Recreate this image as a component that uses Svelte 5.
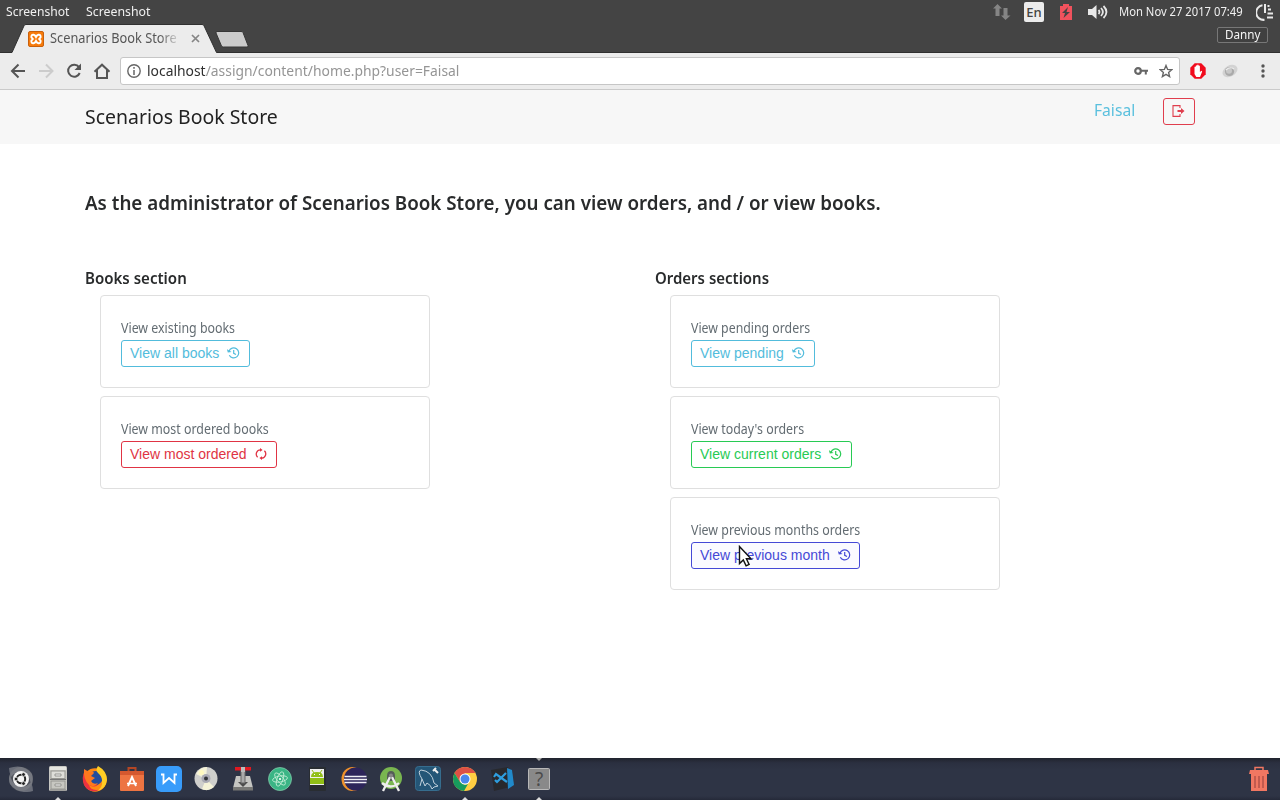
<script>
  function fit(node, width) {
    const natural = node.offsetWidth;
    node.style.width = width + 'px';
    node.style.transform = `scaleX(${width / natural})`;
  }

  const sections = [
    {
      title: 'Books section', width: 102,
      cards: [
        { text: 'View existing books', width: 114, button: 'View all books', bw: 129, tone: 'info', icon: 'history' },
        { text: 'View most ordered books', width: 148, button: 'View most ordered', bw: 156, tone: 'danger', icon: 'sync' }
      ]
    },
    {
      title: 'Orders sections', width: 114,
      cards: [
        { text: 'View pending orders', width: 119.5, button: 'View pending', bw: 124, tone: 'info', icon: 'history' },
        { text: "View today's orders", width: 113, button: 'View current orders', bw: 161, tone: 'success', icon: 'history' },
        { text: 'View previous months orders', width: 169.5, button: 'View previous month', bw: 169, tone: 'primary', icon: 'history' }
      ]
    }
  ];
  const apps = ['ubuntu', 'files', 'firefox', 'software', 'wps', 'disc', 'installer', 'atom', 'android', 'eclipse', 'studio', 'mysql', 'chrome', 'code', 'unknown'];
  const running = ['files', 'chrome', 'unknown'];
</script>

<div class="screen">
  <header class="panel">
    <span class="fit" use:fit={63}>Screenshot</span>
    <span class="fit second" use:fit={64}>Screenshot</span>
    <div class="tray">
      <svg class="net" width="18" height="18" viewBox="0 0 18 18"><path fill="#858585" d="M4.500 1 9 5.500H6.500V13h-4V5.500H0zM10.500 5h4v7.500H17.500L12.500 17 8 12.500h2.500z" /></svg>
      <span class="lang">En</span>
      <svg class="battery" width="12" height="16" viewBox="0 0 12 16"><path fill="#f0525d" d="M3 0h6v2h3v14H0V2h3z" /><path fill="#444" d="M8 3 2 9h3l-1.500 5L10 8H6.500z" /></svg>
      <svg class="sound" width="20" height="14" viewBox="0 0 20 14"><path fill="#e8e8e8" d="M0 4h4l4.500-4v14L4 10H0z" /><g fill="none" stroke="#e8e8e8" stroke-width="1.800"><path d="M10.500 5q2 2 0 4M13 3q3.800 4 0 8M15.500 1q6 6 0 12" /></g></svg>
      <span class="fit clock" use:fit={124}>Mon Nov 27 2017 07:49</span>
      <svg class="power" width="18" height="17" viewBox="0 0 18 17"><g fill="none" stroke="#e8e8e8" stroke-width="2"><path d="M6.500 1.300A7.200 7.200 0 0 0 8.500 15.800M9 0v9M12 5.500h3M11.500 9.500H17M11 13.500h6M11.500 2h2" /></g></svg>
    </div>
  </header>

  <div class="tabs">
    <div class="tab">
      <svg class="shape" width="209" height="29" viewBox="0 0 209 29"><path fill="#ececec" stroke="#303030" d="M-2 28.500H1L13 1.800Q13.600.5 15 .5H191q1.500 0 2 1.300l12.500 26.700H211V30H-2z" /></svg>
      <svg class="xampp" width="16" height="16" viewBox="0 0 16 16"><rect x=".5" y=".5" width="15" height="15" rx="1.500" fill="#f77b0b" stroke="#c9600c" /><path d="M5.500 3.800Q3 3.500 3.400 6.300L4.800 8 3.400 9.700Q3 12.500 5.500 12.200 7 12 8 10 9 12 10.500 12.200 13 12.500 12.600 9.700L11.200 8l1.400-1.700Q13 3.500 10.500 3.800 9 4 8 6 7 4 5.500 3.800z" fill="none" stroke="#fff" stroke-width="1.900" /></svg>
      <div class="caption"><span class="fit" use:fit={127}>Scenarios Book Store</span></div>
      <svg class="close" width="9" height="9" viewBox="0 0 9 9"><path d="m1 1 7 7M8 1 1 8" stroke="#858585" stroke-width="1.700" /></svg>
    </div>
    <svg class="newtab" width="34" height="17" viewBox="0 0 34 17"><path fill="#cbcbcb" stroke="#363636" d="M2 .5h24q1.500 0 2 1l5 13q.5 1.500-1 1.500H8.500q-1.500 0-2-1L1 2Q.5.500 2 .5z" /></svg>
    <div class="profile"><span class="fit" use:fit={35}>Danny</span></div>
  </div>

  <div class="toolbar">
    <svg class="nav" width="101" height="18" viewBox="0 0 101 18"><g fill="none" stroke="#555" stroke-width="2"><path d="M15 9H2.500M8.500 2.500 2 9l6.500 6.500" /><path stroke="#ccc" d="M29 9h13M36 2.500 42.500 9 36 15.500" /><path d="M69 5.200A6 6 0 1 0 69.700 11" /><path fill="#555" stroke="none" d="M71 1.500V8h-6.500z" /><path d="M84.500 9.700 92 2.700l7.500 7M87 8v8h10V8" /></g></svg>
    <div class="address">
      <svg width="14" height="14" viewBox="0 0 14 14"><circle cx="7" cy="7" r="6.200" fill="none" stroke="#666" stroke-width="1.400" /><path d="M7 6v5M7 3v1.700" stroke="#666" stroke-width="1.500" /></svg>
      <span class="fit url" use:fit={312}><b>localhost</b>/assign/content/home.php?user=Faisal</span>
      <svg class="key" width="14" height="8" viewBox="0 0 14 8"><path fill="none" stroke="#666" stroke-width="2" d="M7 3.700H14M11.800 4v3.500" /><circle cx="4" cy="4" r="2.800" fill="none" stroke="#666" stroke-width="2.200" /></svg>
      <svg class="star" width="14" height="14" viewBox="0 0 14 14"><path fill="none" stroke="#666" stroke-width="1.400" d="m7 1.500 1.600 3.900 4.200.3-3.200 2.700 1 4.200L7 10.300l-3.600 2.300 1-4.200L1.200 5.700l4.200-.3z" /></svg>
    </div>
    <svg class="adblock" width="16" height="16" viewBox="0 0 16 16"><path fill="#f10b1d" d="M4.700.3h6.600l4.400 4.400v6.600l-4.400 4.400H4.700L.3 11.300V4.700z" /><path fill="#fff" d="M4.500 4q.7-1 1.300 0V2.700q.8-1 1.400 0V2q.8-1 1.400 0v.8q.9-.8 1.300.4V9l1.600-1.200q1 .2.500 1.200L10 14H6.300L4.500 11z" /></svg>
    <svg class="ext" width="16" height="14" viewBox="0 0 16 14"><ellipse cx="8" cy="7" rx="8" ry="5.500" fill="#d2d2d2" transform="rotate(-30 8 7)" /><circle cx="7.500" cy="7.500" r="4.600" fill="#aaa" /><circle cx="7" cy="6.800" r="3" fill="#c8c8c8" /><path d="M4 6q4-4 8-1" fill="none" stroke="#eee" stroke-width="1.100" /></svg>
    <svg class="more" width="4" height="14" viewBox="0 0 4 14"><g fill="#555"><circle cx="2" cy="2" r="1.700" /><circle cx="2" cy="7" r="1.700" /><circle cx="2" cy="12" r="1.700" /></g></svg>
  </div>

  <nav class="site">
    <span class="fit brand" use:fit={192.5}>Scenarios Book Store</span>
    <span class="fit user" use:fit={41}>Faisal</span>
    <button class="logout" aria-label="Log out"><svg width="13" height="12" viewBox="0 0 13 12"><path fill="none" stroke="#e03e4d" stroke-width="1.100" d="M8 3V.6H1v10.800h7V9" /><path fill="#e03e4d" d="M5.500 5.100H9V3l3.500 3L9 9V6.900H5.500z" /></svg></button>
  </nav>

  <main>
    <h1><span class="fit" use:fit={796}>As the administrator of Scenarios Book Store, you can view orders, and / or view books.</span></h1>
    <div class="columns">
      {#each sections as section}
        <section>
          <h2><span class="fit" use:fit={section.width}>{section.title}</span></h2>
          {#each section.cards as card}
            <article>
              <p><span class="fit" use:fit={card.width}>{card.text}</span></p>
              <button class="action {card.tone}" style="width: {card.bw}px">
                <span>{card.button}</span>
                {#if card.icon === 'history'}
                  <svg width="13" height="12" viewBox="0 0 13 12"><path fill="none" stroke="currentColor" stroke-width="1.200" d="M2 4.200A5 5 0 1 1 2.300 8.300M6.700 3v3.300l2.300 1.300" /><path fill="currentColor" d="M-.1 2.200.8 5.600l3.800-.5z" /></svg>
                {:else}
                  <svg class="sync" width="12" height="12" viewBox="0 0 12 12"><path fill="none" stroke="currentColor" stroke-width="1.300" d="M2.600 9.200A4.300 4.300 0 0 1 5.500 1.800M9.400 2.800A4.300 4.300 0 0 1 6.500 10.200" /><path fill="currentColor" d="M5 0v3.800L7.600 1.900zM7 8.200V12L4.400 10.100z" /></svg>
                {/if}
              </button>
            </article>
          {/each}
        </section>
      {/each}
    </div>
    <svg class="cursor" width="16" height="24" viewBox="0 0 16 24"><path fill="#fff" stroke="#111" stroke-width="1.400" d="M1.500 1.500v17l3.800-3.600 2.800 6 3-1.400-2.700-5.700H13z" /></svg>
  </main>

  <footer class="dock">
    {#each apps as app}
      <div class="app">
        <svg width="26" height="26" viewBox="0 0 26 26">
          {#if app === 'ubuntu'}
            <circle cx="13" cy="13" r="12" fill="#50535c" /><path d="M1 2Q16-3 24 8q2 6-1 13 0-10-7-14T3 11Q1 6 1 2zM25 25Q10 29 2 18 0 13 2 8q1 9 8 12t13-4q2 5 2 9z" fill="#8b8e95" opacity=".65" /><circle cx="13" cy="13" r="8" fill="#f5f5f5" /><circle cx="13" cy="13" r="4.200" fill="none" stroke="#222" stroke-width="2" /><g fill="#222" stroke="#f5f5f5" stroke-width=".8"><circle cx="8" cy="13" r="1.900" /><circle cx="15.500" cy="8.500" r="1.900" /><circle cx="15.500" cy="17.500" r="1.900" /></g>
          {:else if app === 'files'}
            <rect x="4" y="0" width="18" height="25" rx="1.500" fill="#c8c8c3" /><path fill="#e6e6e1" d="M5 1h16v3H5z" /><path d="M5 13.500h16M5 24h16" stroke="#777" /><rect x="6" y="5" width="14" height="7.500" fill="#deded9" stroke="#969691" /><rect x="6" y="15" width="14" height="8" fill="#c7c7c1" stroke="#969691" /><path d="M10 10V8h6v2zM10 20v-2h6v2z" fill="#eee" stroke="#858580" stroke-width=".8" />
          {:else if app === 'firefox'}
            <circle cx="13" cy="14" r="11.700" fill="#ff8b14" /><path fill="#ec3240" d="M3 5q3 0 4 2l4 2-3 4q1 6 9 4-3 6-10 2Q9 26 20 23 8 29 2 19-1 10 3 5z" /><circle cx="13.500" cy="12" r="7" fill="#254d9d" /><path fill="#ffcd24" d="M16 0q9 5 9 14-1 9-10 11 6-4 5-10 0-5-4-8-3-3 0-7z" /><path fill="#ff781e" d="m2 3 5 3q4-2 5 1L9 10l4 2-4 3q2 4 7 2-3 5-9 2-6-6-5-16z" />
          {:else if app === 'software'}
            <path d="M9.500 6V2h7v4" fill="none" stroke="#b44624" stroke-width="2" /><path fill="#ed7442" d="M1 5h24v19q0 1-1 1H2q-1 0-1-1z" /><path fill="#d4582f" d="M1 5h24v4H1z" /><path fill="none" stroke="#fff" stroke-width="1.900" d="m9 20 4-9 4 9" /><path stroke="#fff" stroke-width="1.500" d="M8 17.500h10" />
          {:else if app === 'wps'}
            <rect width="26" height="26" rx="5" fill="#389cfa" /><path fill="none" stroke="#fff" stroke-width="1.800" d="M5 8.500h2.500V17L13 12l5.500 5V8.500H21" />
          {:else if app === 'disc'}
            <circle cx="13" cy="12.500" r="11.500" fill="#cfcfcc" /><path fill="#f5f3d8" d="M13 13 3 8Q7 1 14 1zM13 13l8 8q-6 5-12 2z" /><circle cx="13" cy="12.500" r="4.500" fill="#aaaab4" /><circle cx="13" cy="12.500" r="2" fill="#34363b" /><circle cx="8.500" cy="6.500" r="2.500" fill="#fff9c0" />
          {:else if app === 'installer'}
            <path d="M6 10h14l3 12v2H3v-2z" fill="#c5c5c2" /><path d="M3 21h20v3.500H3z" fill="#777775" /><path fill="#4b4b4b" d="M8 16h10l-5 5z" /><path fill="#aaa" stroke="#666" d="M11 2h4v15h-4z" /><path fill="#df1921" d="M5 1h16v3.500H5z" /><path fill="#bbb" d="M11 1h4v5h-4z" />
          {:else if app === 'atom'}
            <circle cx="13" cy="13" r="11.500" fill="#3ab585" stroke="#8ccfb0" stroke-width=".7" /><g fill="none" stroke="#bcebd2" stroke-width=".9"><ellipse cx="13" cy="13" rx="3" ry="7.500" transform="rotate(20 13 13)" /><ellipse cx="13" cy="13" rx="3" ry="7.500" transform="rotate(80 13 13)" /><ellipse cx="13" cy="13" rx="3" ry="7.500" transform="rotate(140 13 13)" /></g><circle cx="13" cy="13" r="1.100" fill="#fff" />
          {:else if app === 'android'}
            <rect x="5" y="1" width="17" height="24" rx="1" fill="#292d32" /><path fill="#eee" d="M6 3h14v16H6z" /><path fill="#91bf16" d="M6 12h14v6H6zM7 11q0-5 6-5t6 5z" /><path stroke="#91bf16" d="m8 4 2 3m8-3-2 3" /><path fill="#fff" d="M10 8h1v1h-1zm5 0h1v1h-1z" />
          {:else if app === 'eclipse'}
            <ellipse cx="11.500" cy="13" rx="11" ry="12" fill="#ef912b" /><circle cx="14.500" cy="13" r="11.500" fill="#2d255a" /><path stroke="#f0eff5" stroke-width="1.500" d="M3.500 10.500h22M3 13.500h23M3.500 16.500h22" />
          {:else if app === 'studio'}
            <circle cx="13" cy="12" r="11" fill="#79b650" /><path fill="#555e58" d="M9 10q0-5 4-5t4 5v5H9z" /><path fill="none" stroke="#eee" stroke-width="2.300" d="m12 11-7 14M14 11l7 14M4 17q9 7 17 0" /><circle cx="13" cy="9.500" r="2" fill="#888" />
          {:else if app === 'mysql'}
            <rect x=".5" y=".5" width="25" height="24" rx="3" fill="#245677" stroke="#366d8e" /><path fill="none" stroke="#c1d1dc" stroke-width="1" d="M5 20 7 13Q2 5 6 4q11 1 13 13l4 3-4 1-2 2q-1-4-5-6l-2 3-3-7" /><path stroke="#eee" stroke-width="2" d="m19 3 4 4M18 5l3-3" />
          {:else if app === 'chrome'}
            <circle cx="13" cy="13" r="12" fill="#ffcd42" /><path fill="#dd5145" d="M2.500 7Q6 1 13 1t10.500 6H13L8 16z" /><path fill="#179c5d" d="M2.500 7 8 16l5 3 3-1-4 7Q1 23 1 13q0-3 1.500-6z" /><circle cx="13" cy="13" r="5.500" fill="#fff" /><circle cx="13" cy="13" r="4.500" fill="#4b87eb" />
          {:else if app === 'code'}
            <path fill="#28292d" d="m2 4 17-3 2 20-16 4z" /><path fill="#218acb" d="m18 2 5 2 2 15-6 4z" /><path fill="none" stroke="#2e9edf" stroke-width="2.200" d="m17 7-9 9-2-2M18 16 7 8l-2 3" />
          {:else}
            <rect x="2.500" y="2.500" width="21" height="21" rx="1" fill="#898989" stroke="#b8b8b8" /><text x="13" y="20" text-anchor="middle" font-size="19" fill="#4b4b4b">?</text>
          {/if}
        </svg>
        {#if running.includes(app)}<i></i>{/if}
        {#if app === 'unknown'}<i class="top"></i>{/if}
      </div>
    {/each}
    <svg class="trash" width="22" height="26" viewBox="0 0 22 26"><path d="M7 5V1.500h8V5" fill="none" stroke="#f17762" stroke-width="1.500" /><path fill="#f17762" d="M2 4h18l1 4H1zM3 8h16v17H3z" /><path stroke="#b45148" stroke-width="1.500" d="M7 10v12M11 10v12M15 10v12" /></svg>
  </footer>
</div>

<style>
  :global(body) { margin: 0; background: #fff; }
  * { box-sizing: border-box; }
  .screen { width: 1280px; height: 800px; overflow: hidden; display: flex; flex-direction: column; font-family: "Noto Sans", sans-serif; background: #fff; }
  svg { display: block; flex: none; }
  .fit { display: inline-block; flex: none; white-space: nowrap; transform-origin: 0 50%; }
  .panel { height: 24px; flex: none; background: #444; color: #f0f0f0; display: flex; align-items: center; padding-left: 6px; font-size: 12.500px; line-height: 22px; }
  .panel > .fit, .clock { padding-bottom: 1px; }
  .second { margin-left: 17px; }
  .tray { display: flex; align-items: center; margin-left: auto; padding-right: 6px; }
  .lang { width: 20px; height: 20px; margin: 0 16px 0 13px; background: #ececec; color: #444; border-radius: 2px; font: 500 13px/20px "Noto Sans", sans-serif; text-align: center; }
  .sound { margin-left: 16px; }
  .clock { margin-left: 11px; }
  .power { margin-left: 13px; }
  .tabs { height: 29px; flex: none; background: #444; border-bottom: 1px solid #303030; display: flex; }
  .tab { position: relative; width: 209px; height: 29px; margin-left: 11px; display: flex; align-items: center; padding-left: 17px; }
  .shape { position: absolute; left: 0; top: 0; }
  .xampp { position: relative; }
  .caption { position: relative; width: 128px; margin-left: 6px; overflow: hidden; font-size: 13.500px; line-height: 27px; color: #555; -webkit-mask-image: linear-gradient(90deg, #000 85%, transparent 103%); mask-image: linear-gradient(90deg, #000 85%, transparent 103%); }
  .close { position: relative; margin-left: 13px; }
  .newtab { margin: 7px 0 0 -5px; }
  .profile { width: 51px; height: 16px; margin: 3px 12px 0 auto; border: 1px solid #777; border-radius: 2px; padding-left: 7px; background: #404040; color: #f5f5f5; font-size: 12px; line-height: 14px; }
  .toolbar { height: 37px; flex: none; background: #ececec; border-bottom: 1px solid #cacaca; display: flex; align-items: center; padding-left: 10px; }
  .address { width: 1060px; height: 28px; margin-left: 9px; background: #fff; border: 1px solid #c6c6c6; border-radius: 3px; display: flex; align-items: center; padding: 0 6px; }
  .url { margin-left: 6px; padding-bottom: 2px; font-size: 14.500px; color: #959595; }
  .url b { font-weight: 400; color: #303030; }
  .key { margin-left: auto; }
  .star { margin-left: 11px; }
  .adblock { margin-left: 10px; }
  .ext { margin-left: 16px; }
  .more { margin-left: 23px; }
  .site { height: 54px; flex: none; background: #f7f7f7; display: flex; align-items: flex-start; padding: 0 85px; }
  .brand { font-size: 20px; line-height: 53px; color: #222; }
  .user { margin-left: auto; font-size: 16px; line-height: 41px; color: #5bc0de; }
  .logout { width: 32px; height: 27px; margin: 8px 0 0 28px; padding: 0 0 1px 8px; border: 1px solid #e03e4d; border-radius: 3px; background: transparent; }
  main { position: relative; flex: 1; min-height: 0; padding: 40px 85px 0; }
  h1 { margin: 0; height: 87px; color: #292b2c; font-size: 20.500px; font-weight: 600; line-height: 37px; }
  .columns { display: grid; grid-template-columns: 570px 540px; }
  h2 { margin: 0; height: 24px; font-size: 15.500px; font-weight: 600; line-height: 14px; color: #292b2c; }
  article { width: 330px; height: 93px; margin: 0 0 8px 15px; border: 1px solid #dfdfdf; border-radius: 4px; padding: 20px; }
  p { margin: 0; height: 24px; font-size: 13.800px; line-height: 24px; color: #636c72; }
  .action { height: 27px; display: flex; align-items: center; justify-content: space-between; padding: 0 9px 0 8px; border: 1px solid; border-radius: 3px; background: transparent; font: 14px/21px "Liberation Sans", Arial, sans-serif; white-space: nowrap; }
  .action svg { margin-bottom: 2px; }
  .action .sync { margin-right: 0; }
  .action span { padding-bottom: 1px; }
  .info { color: #52bcdc; }
  .danger { color: #e03444; }
  .success { color: #28ca54; }
  .primary { color: #4549d6; background: #fafaff; padding-right: 8px; }
  .cursor { position: absolute; left: 738px; top: 401px; }
  .dock { height: 42px; flex: none; background: linear-gradient(#20232d, #2b3040 5px, #2e3445 12px, #2e3445 38px, #252a39); display: flex; padding-left: 2px; }
  .app { position: relative; width: 37px; height: 42px; display: flex; justify-content: center; padding-top: 8px; }
  .app i { position: absolute; left: 16px; bottom: 0; border: 3px solid transparent; border-top: 0; border-bottom-color: #ddd; }
  .app i.top { top: 0; bottom: auto; border-top: 3px solid #aaa; border-bottom: 0; }
  .trash { margin: 8px 10px 0 auto; }
</style>
